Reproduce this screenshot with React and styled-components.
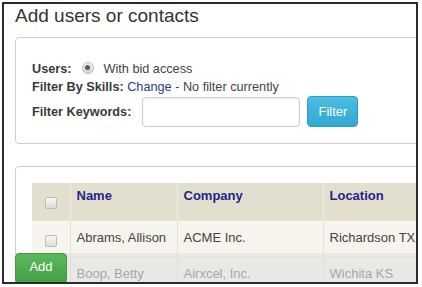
import React from 'react';
import styled, { createGlobalStyle } from 'styled-components';

const GlobalStyle = createGlobalStyle`
    body {
        margin: 0;
        background: #fff;
        font-family: "Liberation Sans", Arial, sans-serif;
    }
`;

const people = [
    { name: 'Abrams, Allison', company: 'ACME Inc.', location: 'Richardson TX' },
    { name: 'Boop, Betty', company: 'Airxcel, Inc.', location: 'Wichita KS' },
];

export default function App() {
    return (
        <>
            <GlobalStyle />
            <Frame>
                <Content>
                    <Title>Add users or contacts</Title>
                    <FilterPanel>
                        <FormLine>
                            <Label>Users:</Label>
                            <Radio />
                            <span>With bid access</span>
                        </FormLine>
                        <FormLine>
                            <Label>Filter By Skills:</Label>&nbsp;
                            <Link>Change</Link>&nbsp;- No filter currently
                        </FormLine>
                        <KeywordRow>
                            <Label>Filter Keywords:</Label>
                            <KeywordInput type="text" />
                            <FilterButton>Filter</FilterButton>
                        </KeywordRow>
                    </FilterPanel>
                    <TablePanel>
                        <Table>
                            <colgroup>
                                <col style={{ width: 38 }} />
                                <col style={{ width: 107 }} />
                                <col style={{ width: 146 }} />
                                <col style={{ width: 180 }} />
                            </colgroup>
                            <thead>
                                <tr>
                                    <HeadCheck><Checkbox /></HeadCheck>
                                    <Th>Name</Th>
                                    <Th>Company</Th>
                                    <Th>Location</Th>
                                </tr>
                            </thead>
                            <tbody>
                                {people.map((p) => (
                                    <Row key={p.name}>
                                        <BodyCheck><Checkbox /></BodyCheck>
                                        <Td>{p.name}</Td>
                                        <Td>{p.company}</Td>
                                        <Td>{p.location}</Td>
                                    </Row>
                                ))}
                            </tbody>
                        </Table>
                    </TablePanel>
                </Content>
                <Footer>
                    <AddButton>Add</AddButton>
                </Footer>
            </Frame>
        </>
    );
}

const Frame = styled.div`
    position: relative;
    box-sizing: border-box;
    margin: 2px 0 0 2px;
    width: 416px;
    height: 282px;
    border: 2px solid #2b2b2b;
    overflow: hidden;
    background: #fff;
`;

const Content = styled.div`
    width: 560px;
    padding: 1px 0 0 11px;
`;

const Title = styled.h1`
    margin: 0 0 11px;
    font-size: 19px;
    font-weight: normal;
    line-height: 21px;
    color: #333;
`;

const Panel = styled.div`
    border: 1px solid #cfcfcf;
    border-radius: 4px;
    background: #fff;
`;

const FilterPanel = styled(Panel)`
    padding: 22px 16px 16px;
    font-size: 12.7px;
    color: #444;
`;

const TablePanel = styled(Panel)`
    margin-top: 22px;
    padding: 16px;
`;

const FormLine = styled.div`
    display: flex;
    align-items: center;
    height: 18px;
    white-space: nowrap;
`;

const Label = styled.span`
    font-weight: bold;
    color: #3a3a3a;
`;

const Link = styled.span`
    color: #2b3a8c;
`;

const Radio = styled.span`
    box-sizing: border-box;
    display: inline-flex;
    align-items: center;
    justify-content: center;
    width: 12px;
    height: 12px;
    margin: -3px 10px 0 10px;
    border: 1px solid #bdbdbd;
    border-radius: 50%;
    background: linear-gradient(#f4f4f4, #d4d4d4);
    box-shadow: 0 0 1px rgba(0, 0, 0, 0.15);

    &::after {
        content: '';
        width: 5px;
        height: 5px;
        border-radius: 50%;
        background: #5a5a5a;
    }
`;

const KeywordRow = styled.div`
    display: flex;
    align-items: center;
    height: 31px;
`;

const KeywordInput = styled.input`
    box-sizing: border-box;
    width: 158px;
    height: 30px;
    margin: 0 7px 0 11px;
    border: 1px solid #cdcdcd;
    border-radius: 4px;
    box-shadow: inset 0 1px 2px rgba(0, 0, 0, 0.08);
    outline: none;
`;

const FilterButton = styled.button`
    box-sizing: border-box;
    width: 51px;
    height: 31px;
    padding: 0;
    border: 1px solid #2a9dc4;
    border-radius: 4px;
    background: linear-gradient(#4cbde2, #32a7d2);
    color: #fff;
    font-family: inherit;
    font-size: 13px;
`;

const Table = styled.table`
    table-layout: fixed;
    width: 471px;
    border-collapse: collapse;
    font-size: 13px;
`;

const Th = styled.th`
    height: 37px;
    padding: 0 6px 13px;
    box-sizing: border-box;
    background: #e3dfcf;
    border-left: 1px solid #efece2;
    text-align: left;
    color: #23238c;
    font-weight: bold;
    white-space: nowrap;
`;

const HeadCheck = styled.th`
    height: 37px;
    padding: 0;
    background: #e3dfcf;
    text-align: center;
    vertical-align: middle;
`;

const Row = styled.tr`
    background: #f6f4ec;
    border-top: 1px solid #e6e3da;
`;

const Td = styled.td`
    height: 32px;
    padding: 0 6px 2px;
    border-left: 1px solid #e2dfd6;
    color: #444;
    white-space: nowrap;
`;

const BodyCheck = styled.td`
    height: 32px;
    padding: 3px 0 0;
    text-align: center;
`;

const Checkbox = styled.span`
    box-sizing: border-box;
    display: inline-block;
    width: 12px;
    height: 12px;
    vertical-align: middle;
    border: 1px solid #bcbcbc;
    border-radius: 2px;
    background: linear-gradient(#f7f7f7, #dcdcdc);
`;

const Footer = styled.div`
    position: absolute;
    left: 11px;
    right: 0;
    bottom: -2px;
    height: 31px;
    background: rgba(224, 224, 224, 0.62);
`;

const AddButton = styled.button`
    box-sizing: border-box;
    width: 52px;
    height: 31px;
    padding: 0 0 4px;
    border: 1px solid #3f9a3f;
    border-radius: 4px;
    background: linear-gradient(#5cb85c, #44a044);
    color: #fff;
    font-family: inherit;
    font-size: 13px;
`;
